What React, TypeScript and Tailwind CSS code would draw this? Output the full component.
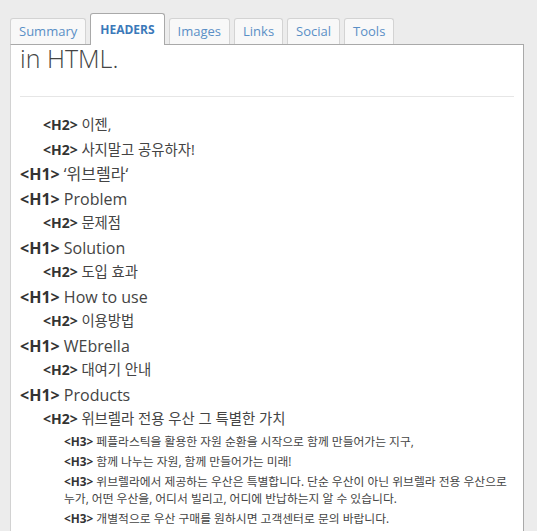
import React from 'react';

type Row = { level: 1 | 2 | 3 | 4; text: string };

const tabs = ['Summary', 'HEADERS', 'Images', 'Links', 'Social', 'Tools'];

const rows: Row[] = [
  { level: 2, text: '이젠,' },
  { level: 2, text: '사지말고 공유하자!' },
  { level: 1, text: '‘위브렐라‘' },
  { level: 1, text: 'Problem' },
  { level: 2, text: '문제점' },
  { level: 1, text: 'Solution' },
  { level: 2, text: '도입 효과' },
  { level: 1, text: 'How to use' },
  { level: 2, text: '이용방법' },
  { level: 1, text: 'WEbrella' },
  { level: 2, text: '대여기 안내' },
  { level: 1, text: 'Products' },
  { level: 2, text: '위브렐라 전용 우산 그 특별한 가치' },
  { level: 3, text: '페플라스틱을 활용한 자원 순환을 시작으로 함께 만들어가는 지구,' },
  { level: 3, text: '함께 나누는 자원, 함께 만들어가는 미래!' },
  {
    level: 3,
    text: '위브렐라에서 제공하는 우산은 특별합니다. 단순 우산이 아닌 위브렐라 전용 우산으로 누가, 어떤 우산을, 어디서 빌리고, 어디에 반납하는지 알 수 있습니다.',
  },
  { level: 3, text: '개별적으로 우산 구매를 원하시면 고객센터로 문의 바랍니다.' },
  { level: 4, text: '개별로 구입하신 우산은 위브렐라 전용 우산으로 등록되지 않고, 일반 소장용 우산으로' },
];

function HeaderRow({ level, text }: Row) {
  if (level === 1) {
    return (
      <div className="h-[24.5px] leading-[24.5px] text-[16px] whitespace-nowrap">
        <b className="font-bold text-[#333]">&lt;H1&gt;</b> <span className="text-[#444]">{text}</span>
      </div>
    );
  }
  if (level === 2) {
    return (
      <div className="h-[24.5px] leading-[24.5px] pl-[23px] text-[14px] whitespace-nowrap">
        <b className="font-bold text-[#333]">&lt;H2&gt;</b> <span className="text-[14.4px] text-[#444]">{text}</span>
      </div>
    );
  }
  if (level === 3) {
    return (
      <div className="mr-[-6px] py-[1.5px] leading-[17px] pl-[44px] text-[11.8px] break-keep">
        <b className="font-bold text-[#333]">&lt;H3&gt;</b> <span className="text-[#444]">{text}</span>
      </div>
    );
  }
  return (
    <div className="py-[1.5px] leading-[17px] pl-[48px] text-[11.8px] whitespace-nowrap">
      <b className="font-bold text-[#333]">&lt;H4&gt;</b> <span className="text-[#444]">{text}</span>
    </div>
  );
}

export default function App() {
  return (
    <div className="h-[531px] w-[537px] overflow-hidden bg-[#ececec] font-['Open_Sans','Noto_Sans_CJK_KR',sans-serif]">
      {/* Tabs */}
      <div className="flex items-end gap-[4px] pl-[10px] pt-[13px]">
        {tabs.map((t) =>
          t === 'HEADERS' ? (
            <div
              key={t}
              className="relative z-10 -mb-px flex h-[32px] items-center rounded-t-[3px] border border-b-0 border-[#a9a9a9] bg-white px-[9px] text-[12px] font-bold text-[#3b79b9]"
            >
              {t}
            </div>
          ) : (
            <div
              key={t}
              className="flex h-[26px] items-center rounded-t-[3px] border border-b-0 border-[#d3d3d3] bg-[#f8f8f8] px-[8px] text-[13px] text-[#5a8fc6]"
            >
              {t}
            </div>
          )
        )}
      </div>

      {/* Panel */}
      <div className="ml-[10px] h-[600px] w-[514px] overflow-hidden border border-[#a9a9a9] border-l-[#d2d2d2] bg-white px-[9px]">
        <h1 className="mt-[1px] text-[25px] font-light leading-none text-[#444]">in HTML.</h1>
        <div className="mt-[25px] border-t border-[#e6e6e6]" />
        <div className="mt-[16px]">
          {rows.map((r, i) => (
            <HeaderRow key={i} {...r} />
          ))}
        </div>
      </div>
    </div>
  );
}
